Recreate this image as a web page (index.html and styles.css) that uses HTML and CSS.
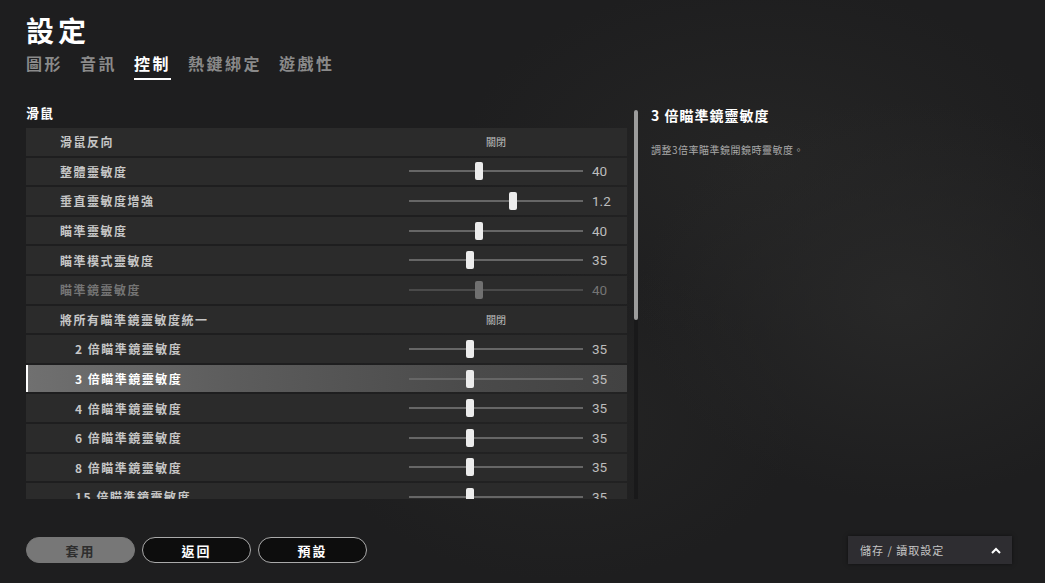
FILE: index.html
```html
<!DOCTYPE html>
<html>
<head>
	<meta charset="utf-8">
	<title>設定</title>
	<link rel="stylesheet" href="styles.css">
</head>
<body>

	<div class="page">
		<div class="header">
			<h1>設定</h1>
			<div class="tabs">
				<span class="tab">圖形</span>
				<span class="tab">音訊</span>
				<span class="tab active">控制</span>
				<span class="tab">熱鍵綁定</span>
				<span class="tab">遊戲性</span>
			</div>
		</div>

		<div class="main">
			<div class="left">
				<div class="section">滑鼠</div>
				<div class="list">
					<div class="row">
						<span class="label">滑鼠反向</span>
						<span class="toggle">關閉</span>
						<span class="val"></span>
					</div>
					<div class="row">
						<span class="label">整體靈敏度</span>
						<span class="slider"><i class="thumb" style="left:40%"></i></span>
						<span class="val">40</span>
					</div>
					<div class="row">
						<span class="label">垂直靈敏度增強</span>
						<span class="slider"><i class="thumb" style="left:60%"></i></span>
						<span class="val">1.2</span>
					</div>
					<div class="row">
						<span class="label">瞄準靈敏度</span>
						<span class="slider"><i class="thumb" style="left:40%"></i></span>
						<span class="val">40</span>
					</div>
					<div class="row">
						<span class="label">瞄準模式靈敏度</span>
						<span class="slider"><i class="thumb" style="left:35%"></i></span>
						<span class="val">35</span>
					</div>
					<div class="row disabled">
						<span class="label">瞄準鏡靈敏度</span>
						<span class="slider"><i class="thumb" style="left:40%"></i></span>
						<span class="val">40</span>
					</div>
					<div class="row">
						<span class="label">將所有瞄準鏡靈敏度統一</span>
						<span class="toggle">關閉</span>
						<span class="val"></span>
					</div>
					<div class="row sub">
						<span class="label">2 倍瞄準鏡靈敏度</span>
						<span class="slider"><i class="thumb" style="left:35%"></i></span>
						<span class="val">35</span>
					</div>
					<div class="row sub selected">
						<span class="label">3 倍瞄準鏡靈敏度</span>
						<span class="slider"><i class="thumb" style="left:35%"></i></span>
						<span class="val">35</span>
					</div>
					<div class="row sub">
						<span class="label">4 倍瞄準鏡靈敏度</span>
						<span class="slider"><i class="thumb" style="left:35%"></i></span>
						<span class="val">35</span>
					</div>
					<div class="row sub">
						<span class="label">6 倍瞄準鏡靈敏度</span>
						<span class="slider"><i class="thumb" style="left:35%"></i></span>
						<span class="val">35</span>
					</div>
					<div class="row sub">
						<span class="label">8 倍瞄準鏡靈敏度</span>
						<span class="slider"><i class="thumb" style="left:35%"></i></span>
						<span class="val">35</span>
					</div>
					<div class="row sub">
						<span class="label">15 倍瞄準鏡靈敏度</span>
						<span class="slider"><i class="thumb" style="left:35%"></i></span>
						<span class="val">35</span>
					</div>
				</div>
			</div>

			<div class="scroll"><div class="scroll-thumb"></div></div>

			<div class="info">
				<h2>3 倍瞄準鏡靈敏度</h2>
				<p>調整3倍率瞄準鏡開鏡時靈敏度。</p>
			</div>
		</div>

		<div class="footer">
			<div class="buttons">
				<button class="btn apply">套用</button>
				<button class="btn">返回</button>
				<button class="btn">預設</button>
			</div>
			<div class="dropdown">
				<span>儲存 / 讀取設定</span>
				<svg width="10" height="7" viewBox="0 0 10 7"><path d="M1 6 L5 2 L9 6" fill="none" stroke="#fff" stroke-width="2"/></svg>
			</div>
		</div>
	</div>

</body>
</html>
```

FILE: styles.css
```css
*{
	margin: 0;
	padding: 0;
	box-sizing: border-box;
}
body{
	width: 1045px;
	height: 583px;
	overflow: hidden;
	font-family: "Noto Sans CJK TC", "Noto Sans", sans-serif;
	color: #fff;
	background: #1e1e1f;
	background-image:
		radial-gradient(ellipse 260px 200px at 900px 300px, #282828, transparent),
		radial-gradient(ellipse 300px 180px at 760px 160px, #252525, transparent),
		radial-gradient(ellipse 240px 160px at 560px 420px, #242424, transparent);
}
.page{
	padding: 14px 0 0 26px;
}
h1{
	font-size: 28px;
	line-height: 32px;
	font-weight: 700;
	letter-spacing: 4px;
}
.tabs{
	display: flex;
	gap: 17px;
	margin-top: 6px;
}
.tab{
	font-size: 16px;
	line-height: 22px;
	font-weight: 700;
	letter-spacing: 2.5px;
	color: #8a8a8a;
	padding-bottom: 4px;
	border-bottom: 2px solid transparent;
}
.tab.active{
	color: #fff;
	border-bottom-color: #fff;
}
.main{
	display: flex;
	margin-top: 23px;
}
.left{
	width: 601px;
}
.section{
	font-size: 13px;
	line-height: 20px;
	font-weight: 700;
	letter-spacing: 1px;
	margin-bottom: 5px;
}
.list{
	height: 371px;
	overflow: hidden;
	display: flex;
	flex-direction: column;
	gap: 2px;
}
.row{
	flex: none;
	height: 27.6px;
	display: flex;
	align-items: center;
	background: #2b2b2b;
	padding-left: 34px;
}
.row.sub{
	padding-left: 49px;
}
.label{
	flex: 1;
	font-size: 12px;
	letter-spacing: 1.5px;
	color: #c6c6c6;
	font-weight: 700;
}
.slider{
	position: relative;
	width: 174px;
	height: 2px;
	background: #666;
	margin-right: 9px;
}
.thumb{
	position: absolute;
	top: -8px;
	width: 8px;
	height: 18px;
	margin-left: -4px;
	background: #ececec;
	border-radius: 2px;
}
.toggle{
	width: 174px;
	margin-right: 9px;
	text-align: center;
	font-size: 10px;
	color: #c0c0c0;
}
.val{
	width: 35px;
	font-family: Roboto, "Liberation Sans", sans-serif;
	font-size: 13.5px;
	color: #bdbdbd;
}
.row.disabled .label,
.row.disabled .val{
	color: #747474;
}
.row.disabled .slider{
	background: #4a4a4a;
}
.row.disabled .thumb{
	background: #707070;
}
.row.selected{
	background: linear-gradient(to right, #707070, #5c5c5c 35%, #4a4a4a 75%, #424242);
	border-left: 2px solid #fff;
	padding-left: 47px;
}
.row.selected .label{
	color: #fff;
}
.scroll{
	width: 4px;
	height: 389px;
	margin: 7px 13px 0 7px;
	background: #19191a;
}
.scroll-thumb{
	height: 210px;
	background: #9c9c9c;
	border-radius: 2px;
}
.info h2{
	font-size: 14px;
	line-height: 20px;
	font-weight: 700;
	letter-spacing: 1px;
	margin-top: 2px;
}
.info p{
	font-size: 10px;
	color: #a8a8a8;
	margin-top: 17px;
	letter-spacing: 0.5px;
}
.footer{
	display: flex;
	justify-content: space-between;
	align-items: center;
	margin-top: 37px;
	padding-right: 33px;
}
.buttons{
	display: flex;
	gap: 7px;
}
.btn{
	width: 109px;
	height: 26px;
	border-radius: 13px;
	background: #0d0d0d;
	border: 1.5px solid #aaa;
	color: #fff;
	font-family: "Noto Sans CJK TC", sans-serif;
	font-size: 13px;
	font-weight: 700;
	letter-spacing: 2px;
}
.btn.apply{
	background: #777;
	border-color: #777;
	color: #2e2e2e;
}
.dropdown{
	width: 164px;
	height: 28px;
	display: flex;
	align-items: center;
	justify-content: space-between;
	padding: 0 11px 0 12px;
	background: #2e2d31;
	box-shadow: 0 0 4px rgba(0,0,0,0.5);
	font-size: 11px;
	letter-spacing: 1px;
	color: #c4c4c4;
}
```
